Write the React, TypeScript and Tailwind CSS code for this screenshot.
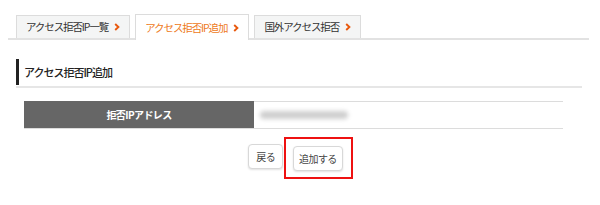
import React from 'react';

const font = { fontFamily: '"Noto Sans CJK JP", "Noto Sans", sans-serif' };

const Chevron = () => (
  <svg width="6" height="8" viewBox="0 0 6 8" className="ml-[6px] shrink-0">
    <path d="M1.2 1 L4.4 4 L1.2 7" fill="none" stroke="#e8580c" strokeWidth="1.9" />
  </svg>
);

const tabs = [
  { label: 'アクセス拒否IP一覧', active: false },
  { label: 'アクセス拒否IP追加', active: true },
  { label: '国外アクセス拒否', active: false },
];

export default function App() {
  return (
    <div className="h-[205px] w-[600px] bg-white text-[#333]" style={font}>
      {/* Tabs */}
      <div className="mx-2 mr-[11px] flex items-end gap-[5px] border-b-2 border-[#e2e2e2] pl-2 pt-[14px]">
        {tabs.map((t) =>
          t.active ? (
            <div
              key={t.label}
              className="-mb-[2px] flex h-[26px] items-center border border-b-0 border-[#dcdcdc] bg-white pl-[9px] pr-[9px] text-[10.5px] tracking-[-1.1px] text-[#ee7a22]"
            >
              {t.label}
              <Chevron />
            </div>
          ) : (
            <div
              key={t.label}
              className="mt-[1px] flex h-[23px] items-center border border-b-0 border-[#dcdcdc] bg-[#f4f5f5] pl-[9px] pr-[9px] text-[10.5px] tracking-[-1.1px] text-[#333]"
            >
              {t.label}
              <Chevron />
            </div>
          )
        )}
      </div>

      {/* Heading */}
      <div className="ml-4 mr-[18px] mt-[19px] border-b-2 border-[#e6e6e6] pb-[1px]">
        <div className="flex h-[26px] items-center border-l-[3px] border-[#222] pl-[5px] text-[11px] font-medium tracking-[-1px] text-[#222]">
          アクセス拒否IP追加
        </div>
      </div>

      {/* Form table */}
      <div className="ml-6 mt-[13px] flex h-[28px] w-[539px]">
        <div className="flex w-[230px] items-center justify-center border-b border-[#dcdcdc] bg-[#666] text-[10px] font-bold tracking-[-0.6px] text-white">
          拒否IPアドレス
        </div>
        <div className="flex flex-1 items-center border-y border-[#dcdcdc] pl-[6px]">
          <div className="h-[8px] w-[88px] rounded-full bg-[#cfcfcf] blur-[2px]" />
        </div>
      </div>

      {/* Buttons */}
      <div className="ml-6 mt-[15px] flex w-[543px] justify-center gap-[10px]">
        <button className="h-[25px] rounded-[4px] border border-[#d8d8d8] bg-white px-[7px] text-[10px] tracking-[-0.6px] text-[#444] shadow-[0_1px_2px_rgba(0,0,0,0.12)]">
          戻る
        </button>
        <div className="relative">
          <button className="h-[25px] rounded-[4px] border border-[#d8d8d8] bg-white px-[5px] text-[10px] tracking-[-0.6px] text-[#444] shadow-[0_1px_2px_rgba(0,0,0,0.12)]">
            追加する
          </button>
          <div className="pointer-events-none absolute -bottom-[8px] -left-[9px] -right-[10px] -top-[7px] border-2 border-[#ee1111]" />
        </div>
      </div>
    </div>
  );
}
